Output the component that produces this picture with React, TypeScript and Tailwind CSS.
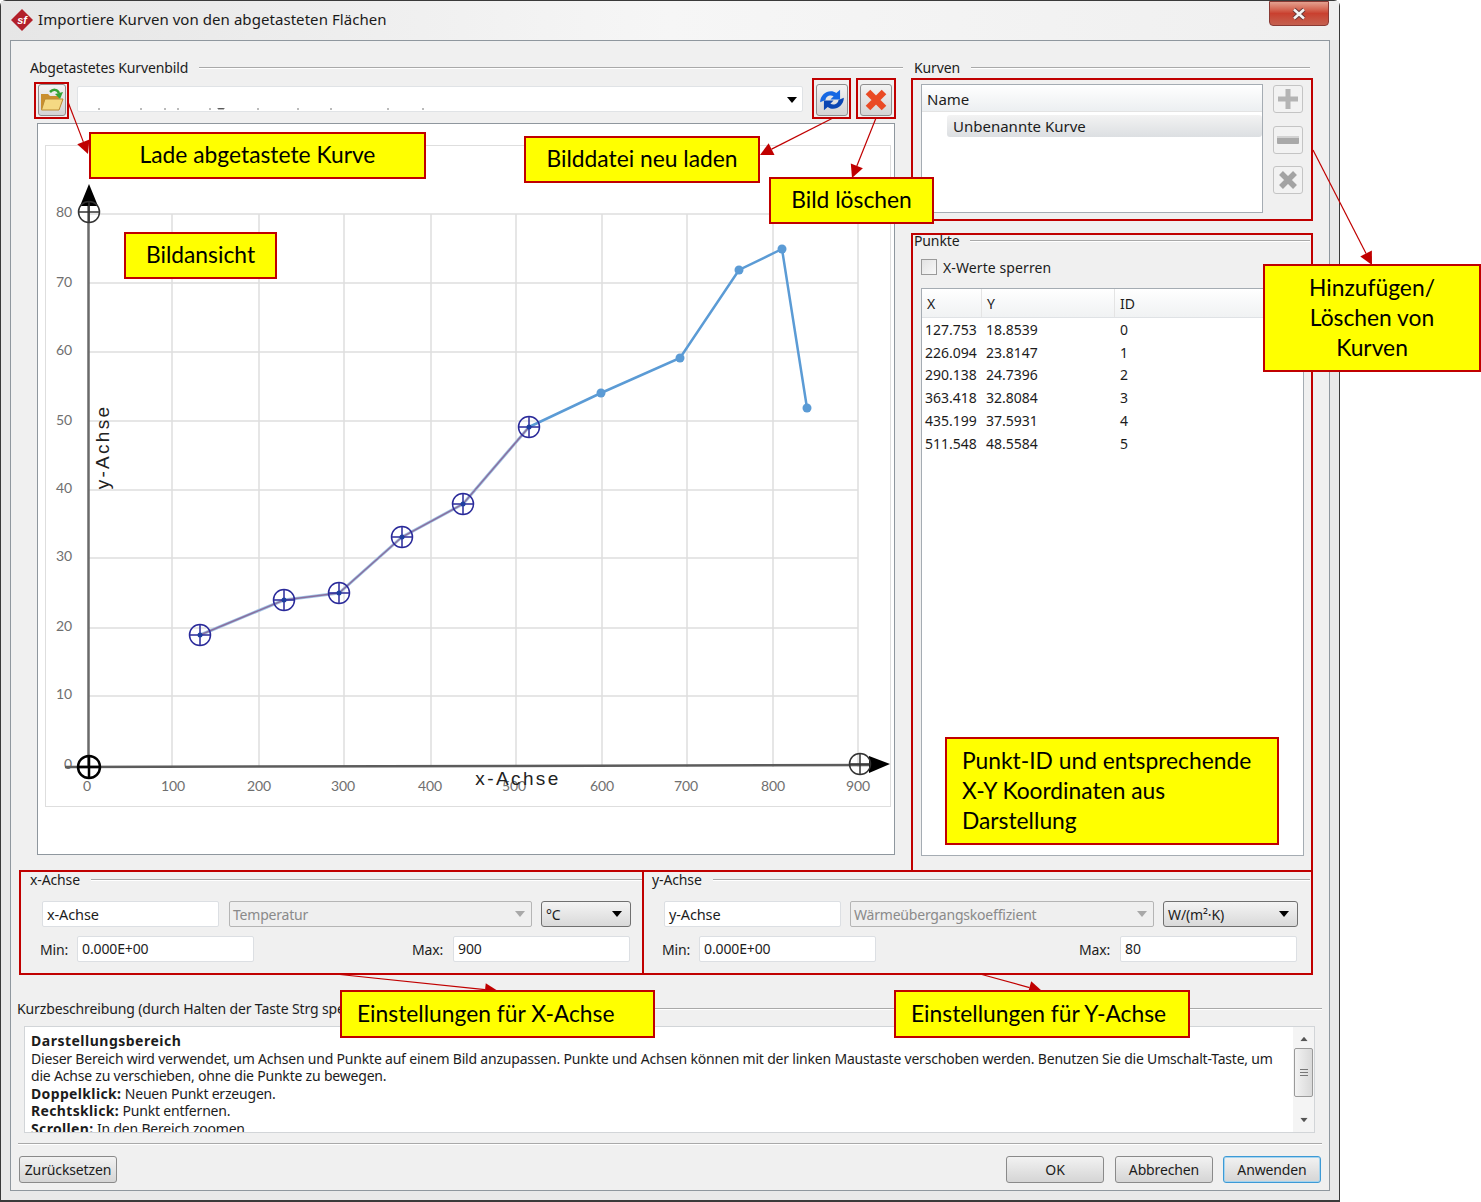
import { ReactNode } from "react";
import clsx from "clsx";

const POINTS = [
  { x: "127.753", y: "18.8539", id: 0 },
  { x: "226.094", y: "23.8147", id: 1 },
  { x: "290.138", y: "24.7396", id: 2 },
  { x: "363.418", y: "32.8084", id: 3 },
  { x: "435.199", y: "37.5931", id: 4 },
  { x: "511.548", y: "48.5584", id: 5 },
];

const DIALOG_FONT = "font-['Noto_Sans',sans-serif] text-[14px] tracking-[-0.13px] text-[#1c1c1c]";

const Legend = ({ title, className }: { title: string; className?: string }) => (
  <div className={clsx("flex h-4 items-center gap-[11px]", className)}>
    <span className="whitespace-nowrap leading-4">{title}</span>
    <div className="h-[2px] flex-1 border-t border-[#a9a9a9] bg-white" />
  </div>
);

const Field = ({ value, className }: { value: string; className?: string }) => (
  <div
    className={clsx(
      "flex h-[26px] w-[177px] items-center rounded-[2px] border border-[#dcdfe3] bg-white px-1 leading-none",
      className
    )}
  >
    {value}
  </div>
);

const Caret = ({ className }: { className?: string }) => (
  <svg width="10" height="6" viewBox="0 0 10 6" className={className}>
    <path d="M0 0h10L5 6z" fill="currentColor" />
  </svg>
);

const DisabledCombo = ({ value, className }: { value: string; className?: string }) => (
  <div
    className={clsx(
      "flex h-[26px] items-center justify-between rounded-[2px] border border-[#b5b5b5] bg-[#efefef] pl-[3px] pr-[6px] tracking-[-0.2px] text-[#8a8a8a]",
      className
    )}
  >
    {value}
    <Caret className="text-[#a8a8a8]" />
  </div>
);

const UnitCombo = ({ value, className }: { value: string; className?: string }) => (
  <div
    className={clsx(
      "flex h-[26px] items-center justify-between rounded-[3px] border border-[#707070] bg-gradient-to-b from-[#f4f4f4] to-[#d9d9d9] pl-1 pr-2",
      className
    )}
  >
    {value}
    <Caret className="text-black" />
  </div>
);

const ToolButton = ({ children, className }: { children: ReactNode; className?: string }) => (
  <div
    className={clsx(
      "flex items-center justify-center rounded-[3px] border border-[#8e8e8e] bg-gradient-to-b from-[#f3f3f3] to-[#d4d4d4]",
      className
    )}
  >
    {children}
  </div>
);

const SideButton = ({ children }: { children: ReactNode }) => (
  <div className="flex h-[28px] w-[30px] items-center justify-center rounded-[3px] border border-[#c4c4c4] bg-[#f2f2f2]">
    {children}
  </div>
);

const DialogButton = ({ label, focused, className }: { label: string; focused?: boolean; className?: string }) => (
  <div
    className={clsx(
      "flex h-[27px] items-center justify-center rounded-[3px] border bg-gradient-to-b from-[#f2f2f2] to-[#d5d5d5]",
      focused ? "border-[#3d9ad6] shadow-[0_0_0_1px_#a5d4ef_inset]" : "border-[#8a8a8a]",
      className
    )}
  >
    {label}
  </div>
);

const CrossMark = ({ cx, cy, r, color, width }: { cx: number; cy: number; r: number; color: string; width: number }) => (
  <g stroke={color} fill="none" strokeWidth={width}>
    <circle cx={cx} cy={cy} r={r} />
    <path d={`M${cx - r} ${cy}H${cx + r}M${cx} ${cy - r}V${cy + r}`} />
  </g>
);

const Chart = () => {
  const gridY = [214, 283, 352, 421, 490, 558, 628, 696];
  const gridX = [172, 259, 344, 431, 516, 602, 687, 773, 858];
  const yLabels = [
    ["80", 212],
    ["70", 282],
    ["60", 350],
    ["50", 420],
    ["40", 488],
    ["30", 556],
    ["20", 626],
    ["10", 694],
  ] as const;
  const xLabels = [
    ["100", 173],
    ["200", 259],
    ["300", 343],
    ["400", 430],
    ["500", 514],
    ["600", 602],
    ["700", 686],
    ["800", 773],
    ["900", 858],
  ] as const;
  const marked = [
    [200, 635],
    [284, 600],
    [339, 593],
    [402, 537],
    [463, 504],
    [529, 427],
  ];
  const dots = [
    [601, 393],
    [680, 358],
    [739, 270],
    [782, 249],
    [807, 408],
  ];

  return (
    <svg width="845" height="661" viewBox="46 146 845 661" className="block">
      <g stroke="#dedede" strokeWidth="1.5">
        {gridY.map((y) => (
          <line key={y} x1="88" x2="858" y1={y} y2={y} />
        ))}
        {gridX.map((x) => (
          <line key={x} x1={x} x2={x} y1="214" y2="767" />
        ))}
      </g>
      <g fontFamily="Lato, sans-serif" fontSize="14" fill="#6f6f6f" textAnchor="middle">
        {yLabels.map(([t, y]) => (
          <text key={t} x="64" y={y + 5}>
            {t}
          </text>
        ))}
        {xLabels.map(([t, x]) => (
          <text key={t} x={x} y="791">
            {t}
          </text>
        ))}
        <text x="68" y="769">0</text>
        <text x="87" y="791">0</text>
      </g>
      <polyline
        points={marked.map((p) => p.join(",")).join(" ")}
        fill="none"
        stroke="#9fc3e6"
        strokeWidth="3"
      />
      <polyline
        points={marked.map((p) => p.join(",")).join(" ")}
        fill="none"
        stroke="#8a6f9e"
        strokeWidth="1.5"
      />
      <polyline
        points={[marked[5], ...dots].map((p) => p.join(",")).join(" ")}
        fill="none"
        stroke="#5b9bd5"
        strokeWidth="2.5"
      />
      {dots.map(([x, y]) => (
        <circle key={x} cx={x} cy={y} r="4.5" fill="#5b9bd5" />
      ))}
      <line x1="88.5" x2="88.5" y1="200" y2="767" stroke="#6a6a6a" strokeWidth="2.5" />
      <line x1="65" x2="872" y1="767" y2="765" stroke="#5c5c5c" strokeWidth="2.5" />
      <path d="M89 184L98 206H80z" fill="#000" />
      <path d="M890 764L869 756V773z" fill="#000" />
      <CrossMark cx={89} cy={212} r={10.5} color="#333" width={1.5} />
      <CrossMark cx={860} cy={764} r={10.5} color="#333" width={1.5} />
      <CrossMark cx={89} cy={767} r={11} color="#000" width={2.5} />
      {marked.map(([x, y]) => (
        <g key={x}>
          <CrossMark cx={x} cy={y} r={10.5} color="#2a2a9a" width={1.5} />
          <circle cx={x} cy={y} r="2.5" fill="#1f3fa0" />
        </g>
      ))}
      <text
        x="518"
        y="785"
        fontFamily="'Liberation Sans', sans-serif"
        fontSize="19"
        letterSpacing="2.4"
        textAnchor="middle"
        fill="#222"
      >
        x-Achse
      </text>
      <text
        transform="translate(109 447) rotate(-90)"
        fontFamily="'Liberation Sans', sans-serif"
        fontSize="19"
        letterSpacing="2.3"
        textAnchor="middle"
        fill="#222"
      >
        y-Achse
      </text>
    </svg>
  );
};

const Callout = ({ children, className }: { children: ReactNode; className: string }) => (
  <div
    className={clsx(
      "absolute flex items-center border-2 border-[#c00000] bg-[#ffff00] pb-[3px] font-['Lato',sans-serif] text-[22.8px] leading-[30px] text-black",
      className
    )}
  >
    {children}
  </div>
);

const Arrow = ({ x1, y1, x2, y2 }: { x1: number; y1: number; x2: number; y2: number }) => {
  const len = Math.hypot(x2 - x1, y2 - y1);
  const ux = (x2 - x1) / len;
  const uy = (y2 - y1) / len;
  const bx = x2 - ux * 13;
  const by = y2 - uy * 13;
  return (
    <g>
      <line x1={x1} y1={y1} x2={bx} y2={by} stroke="#c00000" strokeWidth="1.2" />
      <polygon
        points={`${x2},${y2} ${bx - uy * 6.5},${by + ux * 6.5} ${bx + uy * 6.5},${by - ux * 6.5}`}
        fill="#c00000"
      />
    </g>
  );
};

const Annotations = () => (
  <>
    <div className="absolute left-[34px] top-[82px] h-[37px] w-[35px] border-2 border-[#c00000]" />
    <div className="absolute left-[812px] top-[78px] h-[41px] w-[39px] border-2 border-[#c00000]" />
    <div className="absolute left-[856px] top-[78px] h-[41px] w-[40px] border-2 border-[#c00000]" />
    <div className="absolute left-[911px] top-[78px] h-[143px] w-[402px] border-2 border-[#c00000]" />
    <div className="absolute left-[911px] top-[233px] h-[639px] w-[402px] border-2 border-[#c00000]" />
    <div className="absolute left-[19px] top-[870px] h-[105px] w-[625px] border-2 border-[#c00000]" />
    <div className="absolute left-[642px] top-[870px] h-[105px] w-[671px] border-2 border-[#c00000]" />
    <svg className="absolute left-0 top-0" width="1481" height="1202" viewBox="0 0 1481 1202">
      <Arrow x1={68} y1={102} x2={88} y2={154} />
      <Arrow x1={833} y1={118} x2={760} y2={155} />
      <Arrow x1={876} y1={118} x2={852} y2={178} />
      <Arrow x1={1313} y1={150} x2={1372} y2={265} />
      <Arrow x1={335} y1={974} x2={498} y2={991} />
      <Arrow x1={980} y1={974} x2={1042} y2={991} />
    </svg>
    <Callout className="left-[89px] top-[132px] h-[47px] w-[337px] justify-center">Lade abgetastete Kurve</Callout>
    <Callout className="left-[524px] top-[136px] h-[47px] w-[236px] justify-center">Bilddatei neu laden</Callout>
    <Callout className="left-[769px] top-[177px] h-[47px] w-[165px] justify-center">Bild löschen</Callout>
    <Callout className="left-[124px] top-[232px] h-[47px] w-[153px] justify-center">Bildansicht</Callout>
    <Callout className="left-[1263px] top-[264px] h-[108px] w-[218px] justify-center text-center">
      Hinzufügen/
      <br />
      Löschen von
      <br />
      Kurven
    </Callout>
    <Callout className="left-[945px] top-[737px] h-[108px] w-[334px] pl-[15px]">
      <div>
        Punkt-ID und entsprechende
        <br />
        X-Y Koordinaten aus
        <br />
        Darstellung
      </div>
    </Callout>
    <Callout className="left-[340px] top-[990px] h-[48px] w-[315px] pl-[15px]">Einstellungen für X-Achse</Callout>
    <Callout className="left-[894px] top-[990px] h-[48px] w-[296px] pl-[15px]">Einstellungen für Y-Achse</Callout>
  </>
);

const TitleBar = () => (
  <div className="flex h-[39px] items-start bg-gradient-to-r from-[#e6e6e6] via-[#f6f6f6] to-[#efefef]">
    <svg width="24" height="24" viewBox="0 0 24 24" className="ml-[9px] mt-[7px] shrink-0">
      <path d="M12 1L23 12L12 23L1 12z" fill="#b3202a" />
      <text x="12" y="16" textAnchor="middle" fontFamily="'Liberation Sans', sans-serif" fontWeight="700" fontStyle="italic" fontSize="11" fill="#fff">
        sf
      </text>
    </svg>
    <span className="ml-[4px] mt-[8px] font-['Noto_Sans',sans-serif] text-[15px] leading-5 tracking-[0.06px] text-[#1a1a1a]">
      Importiere Kurven von den abgetasteten Flächen
    </span>
    <div className="ml-auto mr-[10px] flex h-[25px] w-[60px] items-center justify-center rounded-b-[4px] border border-[#8a3a34] bg-gradient-to-b from-[#e3a08f] via-[#c9402f] to-[#c4604f]">
      <svg width="18" height="14" viewBox="0 0 18 14">
        <path d="M4 2.500L14 11.500M14 2.500L4 11.500" stroke="#6b3a3a" strokeWidth="4.500" />
        <path d="M4 2.500L14 11.500M14 2.500L4 11.500" stroke="#f4f4f4" strokeWidth="2.500" />
      </svg>
    </div>
  </div>
);

const Toolbar = () => (
  <div className="mt-2 flex items-center">
    <ToolButton className="ml-2 h-[32px] w-[28px]">
      <svg width="26" height="26" viewBox="0 0 26 26">
        <path d="M2 7h7l2 2h9v4H6l-3 9H2z" fill="#c98f2e" />
        <path d="M6 12h18l-4 11H2.500z" fill="#f5d983" stroke="#bb8a30" strokeWidth="1" />
        <path d="M11 5C14 2 18 2 20 6" fill="none" stroke="#35a335" strokeWidth="2.500" />
        <path d="M24 5l-3 7-5-5z" fill="#35a335" />
      </svg>
    </ToolButton>
    <div className="relative mb-[3px] ml-[11px] h-[26px] w-[726px] rounded-[2px] border border-[#e0e3e6] bg-white">
      <svg width="340" height="3" viewBox="0 0 340 3" className="absolute bottom-0 left-[20px]">
        <path d="M1 0v2M43 0v2M67 0v2M80 0v2M112 0v2M120 0h6v1h-6zM160 0v2M200 0v2M233 0v2M290 0v2M325 0v2" stroke="#777" />
      </svg>
      <Caret className="absolute right-[5px] top-[10px] text-black" />
    </div>
    <ToolButton className="ml-[13px] h-[32px] w-[32px]">
      <svg width="28" height="26" viewBox="0 0 26 24">
        <path d="M2 14C2 6 11 1 17 5.500L20.500 2.500V11.500H11.500L14.500 8.500C11 6.500 7 9 7 12z" fill="#1668e3" />
        <path d="M24 10C24 18 15 23 9 18.500L5.500 21.500V12.500H14.500L11.500 15.500C15 17.500 19 15 19 12z" fill="#0b46b3" />
      </svg>
    </ToolButton>
    <ToolButton className="ml-[12px] h-[32px] w-[32px]">
      <svg width="24" height="24" viewBox="0 0 24 24">
        <path d="M4 4L20 20M20 4L4 20" stroke="#ea4a24" strokeWidth="6.500" />
      </svg>
    </ToolButton>
  </div>
);

const CurvesPanel = () => (
  <div className="ml-[9px] mt-2 flex text-[15px] tracking-normal">
    <div className="h-[129px] w-[342px] border border-[#a5acb3] bg-white">
      <div className="flex h-[27px] items-center border-b border-[#e3e3e3] bg-gradient-to-b from-white to-[#eceff1] pl-[5px] pt-[2px]">
        Name
      </div>
      <div className="ml-[25px] mt-[3px] flex h-[22px] items-center rounded-[3px] bg-gradient-to-b from-[#f3f3f3] to-[#dcdfe2] pl-[6px]">
        Unbenannte Kurve
      </div>
    </div>
    <div className="ml-[10px] mt-[1px] flex flex-col gap-[12.500px]">
      <SideButton>
        <svg width="22" height="22" viewBox="0 0 22 22">
          <path d="M8.500 1h5v7.500H21v5h-7.500V21h-5v-7.500H1v-5h7.500z" fill="#b4b4b4" />
        </svg>
      </SideButton>
      <SideButton>
        <svg width="22" height="8" viewBox="0 0 22 8">
          <rect width="22" height="8" rx="1" fill="#a9a9a9" />
          <rect y="0" width="22" height="2" fill="#d2d2d2" />
        </svg>
      </SideButton>
      <SideButton>
        <svg width="20" height="20" viewBox="0 0 20 20">
          <path d="M3 3L17 17M17 3L3 17" stroke="#a3a3a3" strokeWidth="5.500" />
        </svg>
      </SideButton>
    </div>
  </div>
);

const PointsPanel = () => (
  <>
    <Legend title="Punkte" className="mt-[20px] ml-[2px] mr-[2px]" />
    <div className="ml-[9px] mt-[10px] flex h-4 items-center">
      <div className="h-4 w-4 border border-[#9a9a9a] bg-gradient-to-br from-[#e3e3e3] to-[#f8f8f8]" />
      <span className="ml-[6px] tracking-[0.1px]">X-Werte sperren</span>
    </div>
    <div className="ml-[9px] mt-[13px] h-[568px] w-[383px] border border-[#a5acb3] bg-white tracking-normal">
      <div className="flex h-[29px] border-b border-[#dfe2e5] bg-gradient-to-b from-white to-[#f0f2f3]">
        <div className="flex w-[60px] items-center border-r border-[#e4e4e4] pl-[5px]">X</div>
        <div className="flex w-[133px] items-center border-r border-[#e4e4e4] pl-[5px]">Y</div>
        <div className="flex items-center pl-[5px]">ID</div>
      </div>
      <div>
        {POINTS.map((p) => (
          <div key={p.id} className="flex h-[22.800px] items-center">
            <div className="w-[60px] pl-[3px]">{p.x}</div>
            <div className="w-[133px] pl-[4px]">{p.y}</div>
            <div className="pl-[5px]">{p.id}</div>
          </div>
        ))}
      </div>
    </div>
  </>
);

const AxisGroup = ({
  title,
  name,
  quantity,
  unit,
  max,
  variant,
}: {
  title: string;
  name: string;
  quantity: string;
  unit: string;
  max: string;
  variant: "x" | "y";
}) => (
  <div className={variant === "x" ? "ml-[19px] w-[613px]" : "ml-[9px] w-[658px]"}>
    <Legend title={title} />
    <div className="mt-[13px] flex items-center pl-3">
      <Field value={name} className="text-[14.500px]" />
      <DisabledCombo value={quantity} className={variant === "x" ? "ml-[10px] w-[303px]" : "ml-[9px] w-[304px]"} />
      <UnitCombo value={unit} className={variant === "x" ? "ml-[9px] w-[90px]" : "ml-[9px] w-[135px]"} />
    </div>
    <div className="mt-[9px] flex items-center pl-[10px]">
      <span className="w-[37px]">Min:</span>
      <Field value="0.000E+00" />
      <span className={variant === "x" ? "ml-[158px] w-[41px]" : "ml-[203px] w-[41px]"}>Max:</span>
      <Field value={max} />
    </div>
  </div>
);

const HelpBox = () => (
  <div className="ml-[13px] mt-[9px] flex h-[107px] w-[1291px] border border-[#d2d5d8] bg-white">
    <div className="h-full flex-1 overflow-hidden pl-[6px] pt-[5px] text-[14px] leading-[17.600px] tracking-[-0.2px]">
      <p className="font-bold tracking-[0.5px]">Darstellungsbereich</p>
      <p>
        Dieser Bereich wird verwendet, um Achsen und Punkte auf einem Bild anzupassen. Punkte und Achsen können mit der linken Maustaste verschoben werden. Benutzen Sie die Umschalt-Taste, um
        <br />
        die Achse zu verschieben, ohne die Punkte zu bewegen.
      </p>
      <p>
        <b className="tracking-[0.35px]">Doppelklick:</b> Neuen Punkt erzeugen.
      </p>
      <p>
        <b className="tracking-[0.35px]">Rechtsklick:</b> Punkt entfernen.
      </p>
      <p>
        <b className="tracking-[0.35px]">Scrollen:</b> In den Bereich zoomen.
      </p>
    </div>
    <div className="flex w-[21px] flex-col items-center bg-[#f4f4f4]">
      <Caret className="mt-[9px] rotate-180 scale-75 text-[#555]" />
      <div className="mt-[6px] flex h-[49px] w-[19px] items-center justify-center rounded-[2px] border border-[#9a9a9a] bg-gradient-to-r from-[#f2f2f2] to-[#d9d9d9]">
        <div className="h-[7px] w-[8px] border-y border-[#777]">
          <div className="mt-[2px] h-px bg-[#777]" />
        </div>
      </div>
      <Caret className="mb-[9px] mt-auto scale-75 text-[#555]" />
    </div>
  </div>
);

export default function App() {
  return (
    <div className="relative h-[1202px] w-[1481px] overflow-hidden bg-white">
      <div className={clsx("h-[1202px] w-[1340px] rounded-t-[6px] border border-b-2 border-[#3a3a3a] bg-[#e9e9e9]", DIALOG_FONT)}>
        <TitleBar />
        <div className="ml-[9px] h-[1151px] w-[1320px] border border-[#8f979e] bg-[#f0f0f0] pt-[19px]">
          <div className="flex">
            <div className="ml-[19px] w-[873px]">
              <Legend title="Abgetastetes Kurvenbild" />
              <Toolbar />
              <div className="ml-[7px] mt-[7px] h-[732px] w-[858px] border border-[#8f979e] bg-white pl-[7px] pt-[21px]">
                <div className="h-[662px] w-[846px] border border-[#dedede]">
                  <Chart />
                </div>
              </div>
            </div>
            <div className="ml-[9px] w-[400px]">
              <Legend title="Kurven" className="ml-[2px] mr-[2px]" />
              <CurvesPanel />
              <PointsPanel />
            </div>
          </div>
          <div className="mt-[16px] flex">
            <AxisGroup title="x-Achse" name="x-Achse" quantity="Temperatur" unit="°C" max="900" variant="x" />
            <AxisGroup title="y-Achse" name="y-Achse" quantity="Wärmeübergangskoeffizient" unit="W/(m²·K)" max="80" variant="y" />
          </div>
          <Legend title="Kurzbeschreibung (durch Halten der Taste Strg spe" className="ml-[6px] mr-[7px] mt-[39px]" />
          <HelpBox />
          <div className="mx-[7px] mt-[10px] h-[2px] border-t border-[#a9a9a9] bg-white" />
          <div className="ml-2 mr-2 mt-[11px] flex items-center">
            <DialogButton label="Zurücksetzen" className="w-[98px]" />
            <DialogButton label="OK" className="ml-auto w-[98px]" />
            <DialogButton label="Abbrechen" className="ml-[11px] w-[98px]" />
            <DialogButton label="Anwenden" focused className="ml-[10px] w-[98px]" />
          </div>
        </div>
      </div>
      <Annotations />
    </div>
  );
}
